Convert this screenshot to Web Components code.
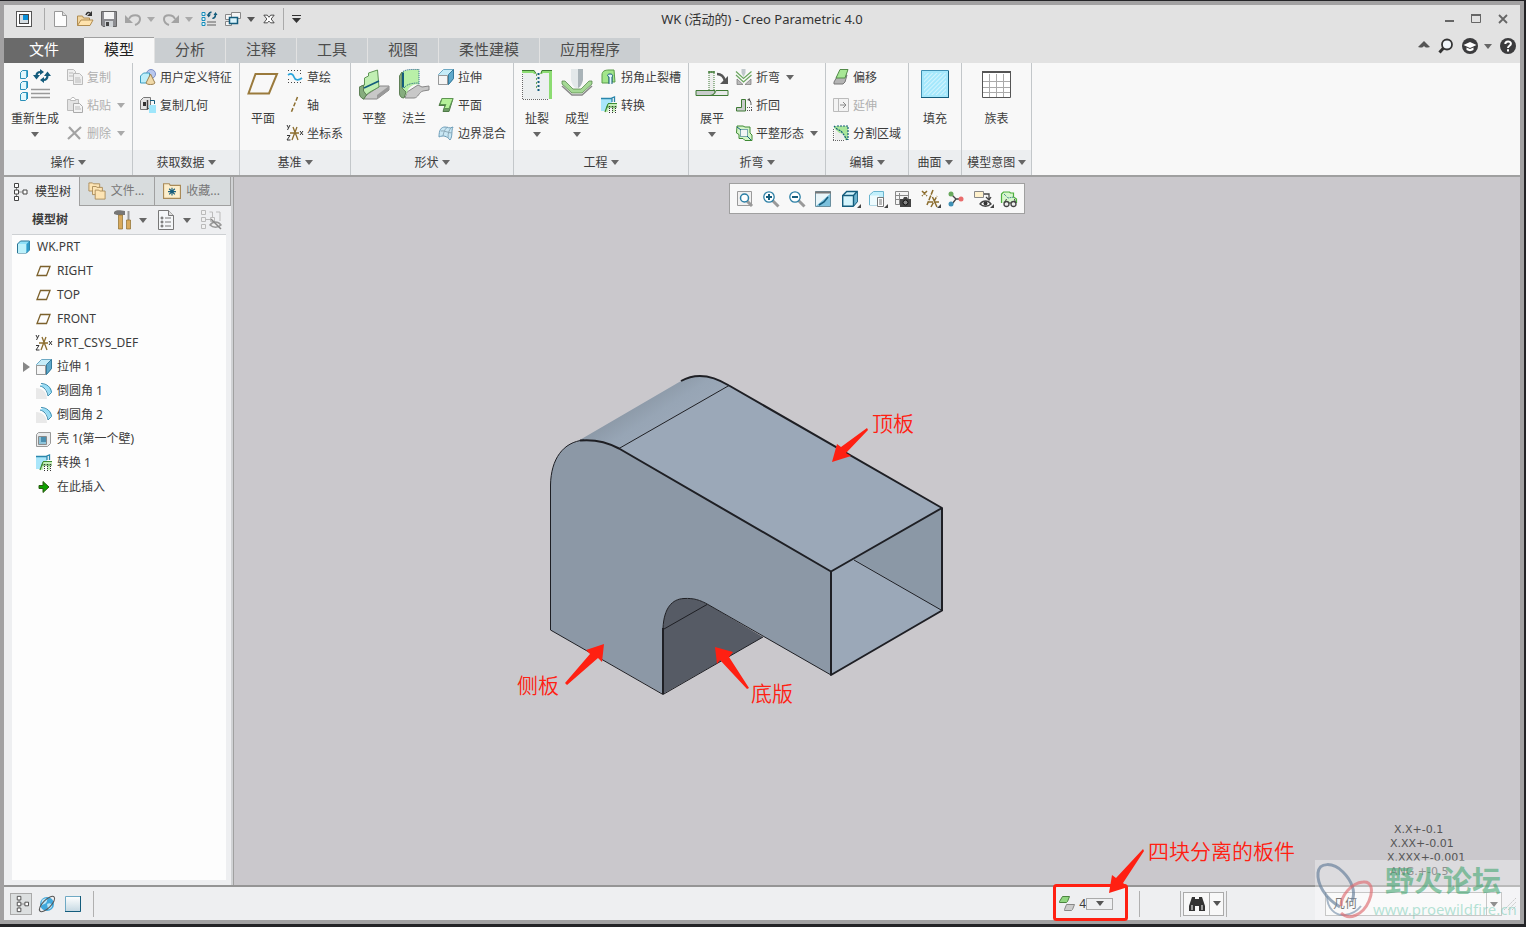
<!DOCTYPE html>
<html lang="zh-CN">
<head>
<meta charset="utf-8">
<title>WK (活动的) - Creo Parametric 4.0</title>
<style>
    html, body {
        margin: 0;
        height: 100%;
    }

    body {
        box-sizing: border-box;
        padding: 1px 2px 3px 0;
        background: #232326;
        color: #3c3c3c;
        font: 12px/16px "Noto Sans", "Noto Sans CJK SC", sans-serif;
        overflow: hidden;
    }
</style>
</head>
<body>
<creo-window></creo-window>

<script>
const ARROW = '<svg class="arrow" width="8" height="5" viewBox="0 0 8 5"><path d="M0 0h8L4 5z" fill="currentColor"/></svg>';

const RESET = `
    button {
        border: 0;
        padding: 0;
        margin: 0;
        background: none;
        color: inherit;
        font: inherit;
        white-space: nowrap;
    }
    svg { display: block; flex: none; }
`;

/* [viewBox size, markup] */
const ICONS = {
    app: [16, '<rect x=".5" y=".5" width="15" height="15" fill="#fff" stroke="#555"/><rect x="3.5" y="3.5" width="9" height="9" fill="#d5dde2" stroke="#444"/><path d="M7 4h5v5H7z" fill="#0a8fd8"/>'],
    'new': [16, '<path d="M1.5.5h8l4 4v11h-12z" fill="#fdfdfd" stroke="#999"/><path d="M9.5.5v4h4" fill="#ddd" stroke="#999"/>'],
    open: [16, '<path d="M.5 14.500V5h5l1 2h6v2" fill="#f2d6a0" stroke="#b08c50"/><path d="M.5 14.500L4 9h12l-3 5.500z" fill="#ffe3ad" stroke="#b08c50"/><path d="M9 4c1-3 3-3 4-2" fill="none" stroke="#333" stroke-width="1.500"/><path d="M15 0v5h-5z" fill="#333"/>'],
    save: [16, '<path d="M.5.5h15v15H2L.5 14z" fill="#8c8c90" stroke="#666"/><path d="M3 1h10v7H3z" fill="#f5f5f5"/><path d="M4 10h8v6H4z" fill="#cfd3d6"/><path d="M5 11h3v4H5z" fill="#444"/>'],
    undo: [16, '<path d="M4 8c2-5 11-5 11 0 0 3-2 5-5 6" fill="none" stroke="#a3a3a3" stroke-width="2"/><path d="M0 4v8h8z" fill="#a3a3a3"/>'],
    redo: [16, '<path d="M12 8C10 3 1 3 1 8c0 3 2 5 5 6" fill="none" stroke="#a3a3a3" stroke-width="2"/><path d="M16 4v8H8z" fill="#a3a3a3"/>'],
    regenSmall: [16, '<g fill="#dff6fb" stroke="#178dbb"><path d="M1 1.500h3v3H1zM1 6.500h3v3H1zM1 11.500h3v3H1z"/></g><path d="M6 11h9M6 14h9" stroke="#8c8c8c" stroke-width="1.500"/><path d="M7.500 4c0-2 2-3 3-2.500M14.500 3.500c0 3-2 4-3 3.500" fill="none" stroke="#145c7c" stroke-width="1.600"/><path d="M5.500 3.500h4.500L7.700 6.500zM12.500 4h4L14.500 1z" fill="#145c7c"/>'],
    windows: [16, '<g fill="#f5f5f5" stroke="#888"><path d="M6.500 1.500h9v6h-9z"/><path d="M.5 3.500h6v5h-6zM.5 10.500h6v4h-6z"/></g><path d="M4.500 6.500h8v6h-8z" fill="#d9f3fb" stroke="#145c7c" stroke-width="1.500"/>'],
    closeDoc: [14, '<path d="M1 2.500h4L7 5l2-2.500h4L9.500 7l3.500 4.500H9L7 9.500l-2 2H1L4.500 7z" fill="#fff" stroke="#333"/>'],
    regen: [32, '<g fill="#e2f7fc" stroke="#2b90b8"><path d="M1.500 3.500l2-2h5v6l-2 2h-5zM1.500 14.500l2-2h5v6l-2 2h-5zM1.500 25.500l2-2h5v6l-2 2h-5z"/></g><path d="M8 2v6M8 13v6M8 24v6" stroke="#178dbb" stroke-width="1.500"/><path d="M12 20.500h19M12 24.500h19M12 28.500h19" stroke="#999" stroke-width="1.500"/><path d="M17.500 7c0-3 2-4 4-4M28.500 6c0 4-2 5-4 5" fill="none" stroke="#145c7c" stroke-width="2.200"/><path d="M14 6h7l-3.500 4.500zM25 7h7l-3.500-4.500zM21 0l4 3-4 3zM25 8l-4 3 4 3z" fill="#145c7c"/>'],
    copy: [16, '<g fill="#eee" stroke="#bbb"><path d="M.5.5h6l2 2v9h-8z"/><path d="M6.500 4.500h6l3 3v8h-9z"/></g><path d="M2 4h4M2 7h4M8 9h5M8 11h6M8 13h6" stroke="#bbb"/>'],
    paste: [16, '<path d="M.5 2.500h11v11H.5z" fill="#e3e3e3" stroke="#bbb"/><path d="M3.500 3.500v-1L5 .5h2l1.500 2v1z" fill="#fff" stroke="#bbb"/><path d="M6.500 6.500h6l3 3v6h-9z" fill="#f3f3f3" stroke="#aaa"/><path d="M8 10h5M8 12h6" stroke="#bbb"/>'],
    remove: [16, '<path d="M2 2l11 12M14 2L1 14" stroke="#a3a3a3" stroke-width="2.200"/>'],
    udf: [16, '<circle cx="11" cy="5" r="4.500" fill="#b9c8ee" stroke="#7c8fc8"/><path d="M.5 7l3-3h6v8l-2 2h-7z" fill="#bdeefa" stroke="#3c9cc0"/><path d="M10.500 5L6 14c1 2 8 2 9 0z" fill="#f0d9a8" stroke="#9c8050"/>'],
    copyGeom: [16, '<path d="M.5 3.500l3-3h7v9l-3 3h-7z" fill="#e5e5e5" stroke="#777"/><path d="M3 5h3v4H3z" fill="#333"/><path d="M7.500 3v9.500" stroke="#444" stroke-width="1.500"/><path d="M9 8h7v8H9z" fill="#9fe6fb"/><path d="M10 3.500h4.500V7" stroke="#145c7c" fill="none"/>'],
    plane: [32, '<path d="M8.500 5H30l-8 19.500H1.500z" fill="none" stroke="#9a7a3c" stroke-width="2"/>'],
    sketch: [16, '<g fill="#444"><path d="M1 1h1v1H1zM4 1h1v1H4zM7 1h1v1H7zM10 1h1v1h-1zM13 1h1v1h-1zM1 13h1v1H1zM4 13h1v1H4zM7 13h1v1H7zM10 13h1v1h-1zM13 13h1v1h-1zM13 4h1v1h-1zM1 10h1v1H1z"/></g><path d="M1 6c3-2 5-1 6 2s4 4 8 1" fill="none" stroke="#2aa5dc" stroke-width="1.700"/>'],
    axis: [16, '<path d="M10.500 0L4 16" stroke="#8c6d2e" stroke-width="1.500" stroke-dasharray="4 2"/>'],
    csys: [16, '<path d="M3 8h9M5 15l5-13M11 15L6 2" stroke="#8c6d2e" stroke-width="1.300"/><path d="M0 0l1.500 3L3 0M1.500 3L.5 5M0 10.500h3L0 15h3.500M13 6l3 4M16 6l-3 4" fill="none" stroke="#333"/>'],
    flat: [32, '<path d="M10 25l12-8h9v4l-12 9H5z" fill="#c8c8c8" stroke="#888"/><path d="M19 26l12-9v4l-12 9z" fill="#999"/><path d="M1.500 18l5-2V9l4-2V4l9-3 1.500 17-9 5-4 3-2 4C3 29 1.500 27 1.500 24z" fill="#c1efb3" stroke="#5f9455"/><path d="M1.500 18l4-2v6l3 4-3 4C3 29 1.500 27 1.500 24z" fill="#86ad7e" stroke="#5f8057"/><path d="M6 19l15-7" stroke="#145c7c" stroke-width="1.700"/>'],
    flange: [32, '<path d="M9 23l11-7 4 2 7-1v4l-6 1c-4 1-5 7-9 7H7z" fill="#c8c8c8" stroke="#888"/><path d="M1.500 7C3 2 6 1 21 .5V15C15 15 10 18 9 24l-3 5C3 29 1.500 27 1.500 24z" fill="#b9f0a8"/><path d="M1.500 7L4 3v16l4 4-2 6C3 29 1.500 27 1.500 24z" fill="#86ad7e" stroke="#5f8057"/><path d="M5 3.500v15" stroke="#145c7c" stroke-width="2"/><path d="M5 2.500C9 0 15 .5 21 .5V16M6 19c3-4 8-5 15-5" fill="none" stroke="#145c7c" stroke-dasharray="1 1"/>'],
    extrude: [16, '<path d="M.5 5.500l5-5h10v9l-5 6h-10z" fill="#c6ecf8" stroke="#6ea9c4"/><path d="M10.500 5.500l5-5v9l-5 6z" fill="#5fa9cb" stroke="#377b9c"/><path d="M.5 6.500h9v9h-9z" fill="#f5f5f5" stroke="#999"/>'],
    planar: [16, '<path d="M4 1.500h11l-4 13H5l2-6H1z" fill="#6e9c66" stroke="#4e7a46"/><path d="M4 1.500h11l-4 10H6l2-4H2z" fill="#b5f099" stroke="#5e9652"/>'],
    blend: [16, '<path d="M1 12c0-7 2-10 6-10 3 0 4 2 8 0-2 4 0 9-3 13-3-4-7-5-11-3z" fill="#c9e7f4" stroke="#6b9cb8"/><path d="M3 6c3-1 7 2 11 2M5 11c1-6 3-8 5-9M10 13c0-5 1-8 3-10" fill="none" stroke="#8ca9b8"/>'],
    rip: [32, '<path d="M2 4h26v26H2z" fill="#eceff0"/><path d="M1.500 30V5M2 30.500h26" stroke="#666" stroke-dasharray="1 1"/><path d="M1 1h12l2 4h-2l-1-1H1zM31 1H21l-2 4h2l1-1h6v26h3z" fill="#8cdc72"/><path d="M1 1.500h12l2 3M31 1.500H21l-1 3" fill="none" stroke="#3f7a34"/><path d="M17.500 4v18" stroke="#145c7c" stroke-width="2" stroke-dasharray="2 2"/><path d="M15.500 5v16" stroke="#6aa65e" stroke-dasharray="2 2"/>'],
    form: [32, '<path d="M10 0h12v11c-1 3-2 8-6 8s-5-5-6-8z" fill="#e3e8ea"/><path d="M17 0h5v11c-1 3-2 7-5 8z" fill="#a9b3b8"/><path d="M1 12h3l8 8h8l8-8h3v3l-10 9H11L1 15z" fill="#a6d996" stroke="#4c8040" stroke-width=".7"/><path d="M1 17l10 9h10l10-9" fill="none" stroke="#888" stroke-width="1.500"/>'],
    relief: [16, '<path d="M1 14V6c0-4 3-5 7-5h5l1 12h-3V6H8v8z" fill="#a2e68b" stroke="#5a9c4a"/><path d="M8 15V8c-2-1-2-3 1-3s3 2 2 3v7" fill="#e5f7fc" stroke="#145c7c"/>'],
    convert: [16, '<path d="M0 1h11v8H6l-1 5H0z" fill="#a9e6fa"/><path d="M0 1.500h10.500M10.500 1l3-1v5M11 1v4" fill="none" stroke="#2a86ac" stroke-width="1.300"/><path d="M4 15l3-8h9v2h-2v6h-3v-5H8l-1 5z" fill="#c3edb6"/><path d="M4 15l3-8M7 6.500h9M5 10h11" fill="none" stroke="#3c8c32" stroke-width="1.200"/><path d="M8.500 9v7M11.500 9v7M14.500 9v7" stroke="#333" stroke-dasharray="1 1"/>'],
    unbend: [32, '<path d="M0 21.500h12l7 0c0 3-2 5-5 5H0z" fill="#c9cccd" stroke="#3f7a34"/><path d="M14 26.500c4 0 5-2 6-5h12v5z" fill="#e8eae9" stroke="#3f7a34"/><path d="M13 21V3h5v18" fill="#eee" stroke="#3f7a34" stroke-dasharray="1 1"/><path d="M12 3h7" stroke="#3f7a34" stroke-width="1.500"/><path d="M21 5c4 0 7 3 8 7" fill="none" stroke="#555" stroke-width="2.500"/><path d="M32 7v8h-8z" fill="#555"/>'],
    bend: [16, '<path d="M5.500 0h4v4L7.500 8 5.500 4z" fill="#c0c8cc"/><path d="M0 2.500l7.500 7 8-7M0 6l7.500 7L15.500 6" fill="none" stroke="#6aa65e" stroke-width="1.200"/><path d="M1 10l6 5.500H1zM15 10l-6 5.500h6z" fill="#bbb" stroke="#777" stroke-width=".7"/>'],
    bendBack: [16, '<path d="M.5 10.500h5v-8h4v11.500h-9z" fill="#c9cccd" stroke="#3f7a34"/><path d="M11 13.500h5M11 10.500h5M15.500 10v4" stroke="#555" stroke-dasharray="1 1"/><path d="M11 3l2.500-2 1 3z" fill="#555"/><path d="M13 3c2 1 2 3 2 5" fill="none" stroke="#555"/>'],
    flatPattern: [16, '<path d="M1 1h6l2 1h5v6l2 2v5.500H9l-2-2H3v-4L.5 8z" fill="#d3f5c7" stroke="#3f8a34"/><path d="M4.500 4.500h7v7h-7z" fill="#f1f4f4" stroke="#145c7c" stroke-dasharray="1 1"/><path d="M1 2l4 3M11 11l4 4" stroke="#145c7c"/>'],
    offset: [16, '<path d="M1 13l4-7h9l-2 7-2 2H1z" fill="#b4b4b4" stroke="#777"/><path d="M3 9L7 .5h8L12 9z" fill="#a7e795" stroke="#538a49"/>'],
    extend: [16, '<path d="M.5 1.500h15v13H.5zM5.500 2v12" fill="#f3f3f3" stroke="#bbb"/><path d="M7 8h6M10 5l3 3-3 3" fill="none" stroke="#888"/>'],
    split: [16, '<path d="M1 1h14v14h-3l-1-5-5-2-5-5z" fill="#a9e69a"/><path d="M2 5v10h9V9L6 8z" fill="#eee"/><path d="M1 1l3 3 4 2 3 4 3 5M4 1h11v14" fill="none" stroke="#145c7c" stroke-width="1.200" stroke-dasharray="2 1"/><path d="M.5 4v12M0 15.500h12" stroke="#666" stroke-dasharray="1 1"/>'],
    fill: [32, '<defs><pattern id="h" width="3" height="3" patternUnits="userSpaceOnUse" patternTransform="rotate(45)"><path d="M0 0v3" stroke="#fff"/></pattern></defs><path d="M2.500 1.500h27v27h-27z" fill="#a5e8fc" stroke="#3f8fb2"/><path d="M5 4h22v22H5z" fill="url(#h)"/><path d="M2 28.500h28M29.500 2v27" stroke="#145c7c"/>'],
    family: [32, '<path d="M1.500 2.500h28v26h-28z" fill="#fff" stroke="#555"/><path d="M8.500 5v23M15.500 5v23M22.500 5v23M2 12.500h27M2 18.500h27M2 23.500h27" stroke="#aaa"/><path d="M1 3h29" stroke="#555" stroke-width="2"/>'],
    tree: [20, '<path d="M4.500 4v12M5 10h7" stroke="#888"/><g fill="#fff" stroke="#444"><path d="M2.500 1.500h4v4h-4zM2.500 8h4v4h-4zM11 8h4v4h-4zM2.500 14.500h4v4h-4z"/></g>'],
    folders: [20, '<g fill="#fde4b4" stroke="#a98a58"><path d="M1 3V1h4l1 1h7v8H1z"/><path d="M5 8V5h4l1 1h6v8H5z"/><path d="M8 12v-3h4l1 1h6v9H8z"/></g>'],
    favorites: [16, '<path d="M.5 14.500V1.500h5l1 1.500h9v11.500z" fill="#fdeecb" stroke="#a98a58"/><path d="M8 5v7M4.500 8.500h7M5.500 6l5 5M10.500 6l-5 5" stroke="#145c7c"/>'],
    hammer: [20, '<path d="M1 2c4-3 7-1 11-1v4H4L1 4z" fill="#777"/><path d="M5.500 5h4v14h-4z" fill="#d9aa5c" stroke="#8c6d2e" stroke-width=".7"/><path d="M14.500 1h2v9h-2z" fill="#999"/><path d="M13.500 10h4v9h-4z" fill="#d9aa5c" stroke="#8c6d2e" stroke-width=".7"/>'],
    settings: [20, '<path d="M1.500.5h10l5 5v14h-15z" fill="#f4f6f8" stroke="#777"/><path d="M11.500.5v5h5" fill="#ddd" stroke="#777"/><g fill="#fff" stroke="#555"><circle cx="5" cy="8" r="1"/><circle cx="5" cy="12" r="1"/><circle cx="5" cy="16" r="1"/></g><path d="M8 8h6M8 12h6M8 16h6" stroke="#777"/>'],
    treeHide: [20, '<g fill="#f1f1f1" stroke="#bbb"><path d="M.5.5h4v4h-4zM.5 7.500h4v4h-4zM.5 14.500h4v4h-4zM9.500 7.500h4v4h-4z"/><path d="M5 9.500h4M8.500 2h3v5M15 2h4v9" fill="none"/></g><path d="M9 15c3-4 8-4 11 0-3 3-8 3-11 0z" fill="#eee" stroke="#999" stroke-width="1.500"/><path d="M10 9l10 10" stroke="#888" stroke-width="1.500"/>'],
    part: [16, '<path d="M1.500 5l3-3h9v9l-3 3h-9z" fill="#8fe0f8" stroke="#2b7494"/><path d="M10.500 5l3-3v9l-3 3z" fill="#2f9bc8"/><path d="M2 5h8v9H2z" fill="#bdf1fb"/>'],
    datum: [16, '<path d="M4.500 3.500H14L10.500 12.500H1z" fill="none" stroke="#7c612c" stroke-width="1.300"/>'],
    round: [16, '<path d="M0 5c6 0 11 4 11 11H0z" fill="#e9e9e9"/><path d="M4 3c5 1 8 4 8 9l4-3c-1-5-4-7-9-8z" fill="#98dcf5"/><path d="M5 .5c6 0 10 4 10.500 9L12 13C11 7 8 4 4 3" fill="none" stroke="#3f8fb2"/>'],
    shell: [16, '<path d="M.5 3.500l2-2h12v11l-3 3h-11z" fill="#e9ebec" stroke="#999"/><path d="M2.500 5.500h8v8h-8z" fill="#8fc4da" stroke="#8a8a8a"/><path d="M5 6h5v5H5z" fill="#4b8fb0"/>'],
    insert: [16, '<path d="M3 6.500h4v-4l6 5.500-6 5.500v-4H3z" fill="#0ea000" stroke="#2a5a10"/>'],
    refit: [16, '<path d="M.5.500h14v14H.5z" fill="#f1f1f1" stroke="#9a9a9a"/><path d="M10 10l5 5" stroke="#999" stroke-width="3"/><circle cx="7.500" cy="7" r="4" fill="#fff" stroke="#2b7fa5" stroke-width="1.500"/>'],
    zoomIn: [16, '<path d="M9.500 9.500l6 6" stroke="#999" stroke-width="3"/><circle cx="6" cy="6" r="5.200" fill="#fff" stroke="#2b7fa5" stroke-width="1.300"/><path d="M3 6h6M6 3v6" stroke="#145c7c" stroke-width="2"/>'],
    zoomOut: [16, '<path d="M9.500 9.500l6 6" stroke="#999" stroke-width="3"/><circle cx="6" cy="6" r="5.200" fill="#fff" stroke="#2b7fa5" stroke-width="1.300"/><path d="M3 6h6" stroke="#145c7c" stroke-width="2"/>'],
    repaint: [16, '<path d="M.5.500h15v15H.5z" fill="#e9f5f9" stroke="#6a8e9e"/><path d="M15 3L1 15h14z" fill="#7cc0dc"/><path d="M0 1.500h16" stroke="#777" stroke-width="2"/><path d="M4 14l5-3 4-5" stroke="#145c7c" fill="none" stroke-width="1.500"/>'],
    cube: [16, '<path d="M.7 4.500l4-4h10.500v10l-4 4.800H.7z" fill="#d4f4fc" stroke="#145c7c" stroke-width="1.400"/><path d="M11 4.500l4-4v10l-4 5z" fill="#6eb4cf"/><path d="M1 4.500h10.500V15M11.500 4.500l3.500-4" fill="none" stroke="#145c7c" stroke-width="1.400"/>'],
    saved: [16, '<path d="M.5 4l4-3.500h10v9L11 14H.5z" fill="#c2f0fc" stroke="#6bb5cf"/><path d="M1 4.500h9V14H1z" fill="#eefbfe"/><path d="M8.500 6.500h6v9h-6z" fill="#fff" stroke="#777"/><path d="M10 9h3M10 11h3M10 13h3" stroke="#777"/>'],
    viewMgr: [16, '<path d="M.5.500h13v13H.5zM1 4.500h12M1 8.500h12M4.500 2v11" fill="#f4f4f4" stroke="#888"/><path d="M5 8h3l1-2h3l1 2h3v8H5z" fill="#444"/><circle cx="10.500" cy="11.500" r="2.500" fill="#888" stroke="#111"/>'],
    datums: [18, '<path d="M1 1l5 5M6 1L1 6M12 0L6 15M7 12h11M10 17l6-11M16 17L11 6" stroke="#8c6d2e" stroke-width="1.500" stroke-dasharray="5 1"/>'],
    spin: [16, '<path d="M4 4l4 4h6M8 8l-4 5" fill="none" stroke="#444" stroke-width="1.300"/><circle cx="3" cy="3" r="2.500" fill="#68a85c"/><circle cx="13" cy="8" r="2.500" fill="#ea6c6c"/><circle cx="3" cy="13" r="2.500" fill="#3f90b5"/>'],
    annot: [18, '<path d="M.5 1.500h9v6h-9z" fill="#fff1cc" stroke="#888"/><path d="M10 4h5v5M12 7l3 3 2-3" fill="none" stroke="#444" stroke-width="1.300"/><path d="M6 14c3-4 8-4 11 0-3 3-8 3-11 0z" fill="#fff" stroke="#444" stroke-width="1.300"/><circle cx="11.500" cy="13.500" r="2" fill="#333"/>'],
    pattern3d: [16, '<path d="M.5 12V3l2-2h6l1 1h3v4l3 2v4" fill="#d7f7cc" stroke="#4eb03f" stroke-width="1.200"/><path d="M3 3l4 4 6-1" fill="none" stroke="#145c7c" stroke-dasharray="1 1"/><circle cx="5.500" cy="13" r="2.500" fill="#eee" stroke="#444" stroke-width="1.300"/><circle cx="12.500" cy="13" r="2.500" fill="#eee" stroke="#444" stroke-width="1.300"/><path d="M8 12h2M3.500 12l2-4M14.500 12l-1-4" stroke="#444"/>'],
    globe: [18, '<circle cx="9" cy="9" r="7" fill="#41a8dc"/><path d="M4 5c3-2 6-3 5 1S4 9 3 11M9 9c3-2 5 0 5 2s-3 4-4 3z" fill="#b9e6f8"/><ellipse cx="9" cy="9" rx="10" ry="4" transform="rotate(-45 9 9)" fill="none" stroke="#555"/>'],
    blank: [16, '<defs><linearGradient id="b" x2="0" y2="1"><stop stop-color="#fff"/><stop offset="1" stop-color="#c5d8e2"/></linearGradient></defs><path d="M.5.500h15v15H.5z" fill="url(#b)" stroke="#6fa9c4"/><path d="M0 15.500h15.500V0" fill="none" stroke="#145c7c"/>'],
    pieces: [16, '<path d="M.5 5.500l3-5h7l-2 5-1 1h-7z" fill="#90d680" stroke="#4c8541"/><path d="M5.500 13.500l2-5h8l-2 5-1 1h-7z" fill="#ccc" stroke="#888"/>'],
    binoculars: [16, '<path d="M3 1h3v2h4V1h3l3 9v5h-6v-5H6v5H0v-5z" fill="#333"/><path d="M2 9h2v5H2zM12 9h2v5h-2z" fill="#999"/>'],
    minimize: [12, '<path d="M2 8h9" stroke="#666" stroke-width="2"/>'],
    maximize: [12, '<path d="M1.500 1.500h9v8h-9z" fill="none" stroke="#666"/><path d="M1 2h10" stroke="#666" stroke-width="2"/>'],
    close: [12, '<path d="M2 2l8 8M10 2l-8 8" stroke="#666" stroke-width="1.800"/>'],
    collapse: [12, '<path d="M0 7l6-6 6 6-2 .500H2z" fill="#555"/><path d="M4 8l2-2 2 2z" fill="#e2e2e2"/>'],
    search: [16, '<circle cx="9" cy="6.500" r="5" fill="#f1f6fa" stroke="#333" stroke-width="1.800"/><path d="M5.500 10l-4 4.500" stroke="#333" stroke-width="3"/>'],
    learn: [16, '<circle cx="8" cy="8" r="8" fill="#3b3b3d"/><path d="M1.500 7L8 4l6.500 3L8 10z" fill="#fff"/><path d="M4.500 9.500V12c2 1.500 5 1.500 7 0V9.500L8 11z" fill="#fff"/>'],
    help: [16, '<circle cx="8" cy="8" r="8" fill="#3b3b3d"/><path d="M5.300 6c0-3.500 5.600-3.300 5.600-.3C10.900 7.700 8 7.800 8 10M8 11.200v2.200" fill="none" stroke="#fff" stroke-width="2"/>']
};

customElements.define('creo-icon',
    class extends HTMLElement {
        constructor() {
            super();
            this.attachShadow({mode: 'open'});
        }

        connectedCallback() {
            const [box, markup] = ICONS[this.getAttribute('name')];
            const size = this.getAttribute('size') || 16;
            this.shadowRoot.innerHTML = `
    <style>
    :host { display: block; flex: none; }
    svg { display: block; overflow: visible; }
    </style>
    <svg width="${size}" height="${size}" viewBox="0 0 ${box} ${box}" aria-hidden="true">${markup}</svg>
`;
        }
    }
);

customElements.define('ribbon-tab',
    class extends HTMLElement {
        constructor() {
            super();
            this.attachShadow({mode: 'open'}).innerHTML = `
    <style>
    ${RESET}
    :host { display: block; background: #caced1; color: #4c4c4c; }
    :host([kind="file"]) { background: #6a6a6a; color: #fff; padding: 0 5px; }
    :host([kind="active"]) { background: #f8f8f8; color: #222; box-shadow: 0 -1px #a0a0a0; }
    button { height: 25px; padding: 0 20px 3px; font-size: 15px; line-height: 22px; }
    </style>
    <button><slot></slot></button>
`;
        }
    }
);

customElements.define('ribbon-group',
    class extends HTMLElement {
        constructor() {
            super();
            this.attachShadow({mode: 'open'});
        }

        connectedCallback() {
            this.shadowRoot.innerHTML = `
    <style>
    ${RESET}
    :host {
        display: flex;
        flex-direction: column;
        border-right: 1px solid #c3c7ca;
    }
    .body {
        display: flex;
        justify-content: center;
        gap: 8px;
        flex: 1;
        padding: 0 7px;
    }
    .title {
        display: flex;
        align-items: center;
        justify-content: center;
        gap: 3px;
        height: 25px;
        padding: 0 5px;
        background: #eceef0;
    }
    .arrow { color: #666; }
    ::slotted(div) { display: flex; flex-direction: column; }
    </style>
    <div class="body"><slot></slot></div>
    <button class="title">${this.getAttribute('label')}${ARROW}</button>
`;
        }
    }
);

customElements.define('tool-button',
    class extends HTMLElement {
        constructor() {
            super();
            this.attachShadow({mode: 'open'});
        }

        connectedCallback() {
            const big = this.hasAttribute('big');
            this.shadowRoot.innerHTML = `
    <style>
    ${RESET}
    :host { display: block; }
    :host([disabled]) { color: #b0b0b0; }
    button {
        display: flex;
        align-items: center;
        gap: 4px;
        height: 28px;
    }
    .label { padding-top: 2px; }
    .arrow { margin-left: 2px; color: #666; }
    :host([disabled]) .arrow { color: #aaa; }
    :host([big]) button {
        flex-direction: column;
        gap: 0;
        min-width: 32px;
        height: 87px;
        padding-top: 6px;
        box-sizing: border-box;
    }
    :host([big]) .label { margin-top: 7px; line-height: 18px; }
    :host([big]) .arrow { margin: 4px 0 0; }
    </style>
    <button ${this.hasAttribute('disabled') ? 'disabled' : ''}>
        <creo-icon name="${this.getAttribute('icon')}" size="${big ? 32 : 16}"></creo-icon>
        <span class="label"><slot></slot></span>
        ${this.hasAttribute('menu') ? ARROW : ''}
    </button>
`;
        }
    }
);

customElements.define('title-bar',
    class extends HTMLElement {
        constructor() {
            super();
            this.attachShadow({mode: 'open'}).innerHTML = `
    <style>
    ${RESET}
    :host {
        display: grid;
        grid-template-columns: 1fr auto 1fr;
        align-items: center;
        height: 28px;
    }
    .quick { display: flex; align-items: center; gap: 8px; padding-left: 12px; }
    .sep { width: 1px; height: 22px; background: #aaa; }
    .quick .arrow { color: #555; }
    .quick .off .arrow { color: #aaa; }
    .pair { display: flex; align-items: center; gap: 6px; }
    .first { margin-right: 4px; }
    h1 { margin: 0; font-size: 13px; font-weight: 400; color: #333; }
    .controls { display: flex; justify-content: flex-end; gap: 15px; padding-right: 11px; }
    </style>
    <div class="quick">
        <button class="first" aria-label="应用"><creo-icon name="app"></creo-icon></button>
        <span class="sep"></span>
        <button aria-label="新建"><creo-icon name="new"></creo-icon></button>
        <button aria-label="打开"><creo-icon name="open"></creo-icon></button>
        <button aria-label="保存"><creo-icon name="save"></creo-icon></button>
        <button class="pair off" aria-label="撤消"><creo-icon name="undo"></creo-icon>${ARROW}</button>
        <button class="pair off" aria-label="重做"><creo-icon name="redo"></creo-icon>${ARROW}</button>
        <button aria-label="重新生成"><creo-icon name="regenSmall"></creo-icon></button>
        <button class="pair" aria-label="窗口"><creo-icon name="windows"></creo-icon>${ARROW}</button>
        <button aria-label="关闭"><creo-icon name="closeDoc" size="12"></creo-icon></button>
        <span class="sep"></span>
        <button aria-label="自定义"><svg width="9" height="8" viewBox="0 0 9 8"><path d="M0 .5h9" stroke="#333"/><path d="M0 3h9L4.500 8z" fill="#333"/></svg></button>
    </div>
    <h1>WK (活动的) - Creo Parametric 4.0</h1>
    <div class="controls">
        <button aria-label="最小化"><creo-icon name="minimize" size="12"></creo-icon></button>
        <button aria-label="最大化"><creo-icon name="maximize" size="12"></creo-icon></button>
        <button aria-label="关闭窗口"><creo-icon name="close" size="12"></creo-icon></button>
    </div>
`;
        }
    }
);

customElements.define('creo-ribbon',
    class extends HTMLElement {
        constructor() {
            super();
            this.attachShadow({mode: 'open'}).innerHTML = `
    <style>
    ${RESET}
    :host { display: block; }
    .tabs { display: flex; gap: 1px; padding-top: 5px; }
    .tabs ribbon-tab:first-child { margin-right: -1px; }
    .tools {
        display: flex;
        align-items: center;
        gap: 8px;
        margin: -9px 4px 0 auto;
    }
    .tools .menu { display: flex; align-items: center; gap: 6px; color: #666; }
    .panels {
        display: flex;
        height: 112px;
        background: #f8f8f8;
        border-bottom: 2px solid #a0a0a0;
    }
    .surface { min-width: 52px; }
    </style>
    <nav class="tabs">
        <ribbon-tab kind="file">文件</ribbon-tab>
        <ribbon-tab kind="active">模型</ribbon-tab>
        <ribbon-tab>分析</ribbon-tab>
        <ribbon-tab>注释</ribbon-tab>
        <ribbon-tab>工具</ribbon-tab>
        <ribbon-tab>视图</ribbon-tab>
        <ribbon-tab>柔性建模</ribbon-tab>
        <ribbon-tab>应用程序</ribbon-tab>
        <div class="tools">
            <button aria-label="折叠"><creo-icon name="collapse" size="12"></creo-icon></button>
            <button aria-label="搜索"><creo-icon name="search"></creo-icon></button>
            <button class="menu" aria-label="学习"><creo-icon name="learn"></creo-icon>${ARROW}</button>
            <button aria-label="帮助"><creo-icon name="help"></creo-icon></button>
        </div>
    </nav>
    <div class="panels">
        <ribbon-group label="操作">
            <tool-button big menu icon="regen">重新生成</tool-button>
            <div>
                <tool-button disabled icon="copy">复制</tool-button>
                <tool-button disabled menu icon="paste">粘贴</tool-button>
                <tool-button disabled menu icon="remove">删除</tool-button>
            </div>
        </ribbon-group>
        <ribbon-group label="获取数据">
            <div>
                <tool-button icon="udf">用户定义特征</tool-button>
                <tool-button icon="copyGeom">复制几何</tool-button>
            </div>
        </ribbon-group>
        <ribbon-group label="基准">
            <tool-button big icon="plane">平面</tool-button>
            <div>
                <tool-button icon="sketch">草绘</tool-button>
                <tool-button icon="axis">轴</tool-button>
                <tool-button icon="csys">坐标系</tool-button>
            </div>
        </ribbon-group>
        <ribbon-group label="形状">
            <tool-button big icon="flat">平整</tool-button>
            <tool-button big icon="flange">法兰</tool-button>
            <div>
                <tool-button icon="extrude">拉伸</tool-button>
                <tool-button icon="planar">平面</tool-button>
                <tool-button icon="blend">边界混合</tool-button>
            </div>
        </ribbon-group>
        <ribbon-group label="工程">
            <tool-button big menu icon="rip">扯裂</tool-button>
            <tool-button big menu icon="form">成型</tool-button>
            <div>
                <tool-button icon="relief">拐角止裂槽</tool-button>
                <tool-button icon="convert">转换</tool-button>
            </div>
        </ribbon-group>
        <ribbon-group label="折弯">
            <tool-button big menu icon="unbend">展平</tool-button>
            <div>
                <tool-button menu icon="bend">折弯</tool-button>
                <tool-button icon="bendBack">折回</tool-button>
                <tool-button menu icon="flatPattern">平整形态</tool-button>
            </div>
        </ribbon-group>
        <ribbon-group label="编辑">
            <div>
                <tool-button icon="offset">偏移</tool-button>
                <tool-button disabled icon="extend">延伸</tool-button>
                <tool-button icon="split">分割区域</tool-button>
            </div>
        </ribbon-group>
        <ribbon-group class="surface" label="曲面">
            <tool-button big icon="fill">填充</tool-button>
        </ribbon-group>
        <ribbon-group label="模型意图">
            <tool-button big icon="family">族表</tool-button>
        </ribbon-group>
    </div>
`;
        }
    }
);

customElements.define('tree-item',
    class extends HTMLElement {
        constructor() {
            super();
            this.attachShadow({mode: 'open'});
        }

        connectedCallback() {
            const parent = this.hasAttribute('parent');
            this.shadowRoot.innerHTML = `
    <style>
    :host {
        display: flex;
        align-items: center;
        height: 24px;
        padding-left: 24px;
        gap: 5px;
    }
    :host([root]) { padding-left: 4px; }
    :host([parent]) { padding-left: 10px; }
    </style>
    ${parent ? '<svg width="9" height="10" viewBox="0 0 9 10"><path d="M1 0v10l7-5z" fill="#888"/></svg>' : ''}
    <creo-icon name="${this.getAttribute('icon')}"></creo-icon>
    <span><slot></slot></span>
`;
        }
    }
);

customElements.define('model-tree',
    class extends HTMLElement {
        constructor() {
            super();
            this.attachShadow({mode: 'open'}).innerHTML = `
    <style>
    ${RESET}
    :host {
        box-sizing: border-box;
        display: flex;
        flex-direction: column;
        flex: none;
        width: 230px;
        background: #eeeff1;
        border-right: 1px solid #a0a0a0;
        box-shadow: inset -2px 0 #d0d2d4;
    }
    .tabs { display: flex; height: 29px; margin-right: 2px; }
    .tabs button {
        box-sizing: border-box;
        display: flex;
        align-items: center;
        gap: 5px;
        width: 76px;
        padding-left: 8px;
        background: #d8dcdd;
        border-right: 1px solid #a0a0a0;
        border-bottom: 1px solid #a0a0a0;
        color: #777;
    }
    .tabs .active { background: none; border-bottom: 0; color: #333; gap: 3px; padding-left: 8px; }
    .head { display: flex; align-items: center; height: 28px; padding-left: 28px; }
    .head b { width: 81px; }
    .head .menu { display: flex; align-items: center; gap: 6px; width: 44px; color: #666; }
    .tree {
        flex: 1;
        margin: 0 7px 5px 8px;
        background: #fdfdfd;
        border-top: 1px solid #cdd0d3;
    }
    </style>
    <div class="tabs">
        <button class="active"><creo-icon name="tree" size="20"></creo-icon>模型树</button>
        <button><creo-icon name="folders" size="18"></creo-icon>文件...</button>
        <button><creo-icon name="favorites" size="18"></creo-icon>收藏...</button>
    </div>
    <div class="head">
        <b>模型树</b>
        <button class="menu" aria-label="设置"><creo-icon name="hammer" size="20"></creo-icon>${ARROW}</button>
        <button class="menu" aria-label="显示"><creo-icon name="settings" size="20"></creo-icon>${ARROW}</button>
        <button aria-label="隐藏" disabled><creo-icon name="treeHide" size="20"></creo-icon></button>
    </div>
    <div class="tree">
        <tree-item root icon="part">WK.PRT</tree-item>
        <tree-item icon="datum">RIGHT</tree-item>
        <tree-item icon="datum">TOP</tree-item>
        <tree-item icon="datum">FRONT</tree-item>
        <tree-item icon="csys">PRT_CSYS_DEF</tree-item>
        <tree-item parent icon="extrude">拉伸 1</tree-item>
        <tree-item icon="round">倒圆角 1</tree-item>
        <tree-item icon="round">倒圆角 2</tree-item>
        <tree-item icon="shell">壳 1(第一个壁)</tree-item>
        <tree-item icon="convert">转换 1</tree-item>
        <tree-item icon="insert">在此插入</tree-item>
    </div>
`;
        }
    }
);

customElements.define('view-toolbar',
    class extends HTMLElement {
        constructor() {
            super();
            const tools = ['refit', 'zoomIn', 'zoomOut', 'repaint', 'cube*', 'saved*', 'viewMgr', 'datums*', 'spin', 'annot*', 'pattern3d'];
            this.attachShadow({mode: 'open'}).innerHTML = `
    <style>
    ${RESET}
    :host {
        display: flex;
        padding: 0 2px;
        border: 1px solid #a0a0a0;
        background: #f8f8f8;
    }
    button {
        display: flex;
        align-items: center;
        justify-content: center;
        position: relative;
        width: 26px;
        height: 29px;
    }
    .menu { width: 27px; }
    .menu::after {
        content: "";
        position: absolute;
        right: 2px;
        bottom: 5px;
        border: 2px solid transparent;
        border-right-color: #444;
        border-bottom-color: #444;
    }
    </style>
    ${tools.map((t) => {
        const name = t.replace('*', '');
        return `<button class="${t === name ? '' : 'menu'}" aria-label="${name}"><creo-icon name="${name}" size="${ICONS[name][0]}"></creo-icon></button>`;
    }).join('')}
`;
        }
    }
);

customElements.define('model-view',
    class extends HTMLElement {
        constructor() {
            super();
            this.attachShadow({mode: 'open'}).innerHTML = `
    <style>
    :host {
        display: flex;
        justify-content: center;
        align-items: flex-start;
        position: relative;
        flex: 1;
        padding-top: 6px;
        background: #cac8cc;
        overflow: hidden;
    }
    .model { position: absolute; left: 266px; top: 183px; }
    .model text { font-size: 21px; font-weight: 350; fill: #ff2012; }
    .tolerance {
        position: absolute;
        right: 50px;
        bottom: 6px;
        width: 84px;
        font-family: "DejaVu Sans", sans-serif;
        font-size: 11px;
        line-height: 14px;
        color: #555;
    }
    .tolerance div { padding-left: 4px; }
    .tolerance div:first-child { padding-left: 8px; }
    .tolerance div:nth-child(3) { padding-left: 1px; }
    </style>
    <view-toolbar></view-toolbar>
    <svg class="model" width="460" height="360" viewBox="500 360 460 360">
        <defs>
            <linearGradient id="roll" gradientUnits="userSpaceOnUse" x1="628" y1="408" x2="650" y2="442">
                <stop stop-color="#8c99a7"/><stop offset=".5" stop-color="#97a5b5"/><stop offset="1" stop-color="#9ba8b8"/>
            </linearGradient>
        </defs>
        <path d="M578 441L681 381C695 373 712 375 729 385.500L619 448.500C606 441 592 438 578 441z" fill="url(#roll)"/>
        <path d="M619 448.500L729 385.500 942 508 831 571.500z" fill="#9ba8b8"/>
        <path d="M831 571.500L942 508V610.500L831 675z" fill="#9ba8b8"/>
        <path d="M854 559L942 508V610.500z" fill="#8b98a6"/>
        <path d="M663 694V628C664 608 672 599 684 598.500 694 598 700 600 708 604.500L763 637z" fill="#565b65"/>
        <path d="M550.500 630V485C551 459 563 442 584 440 596 439 607 442 619 448.500L831 571.500V675L708 604.500C700 600 694 598 684 598.500 672 599 664 608 663 628V694z" fill="#8c98a6"/>
        <g fill="none" stroke="#1e1f24" stroke-linejoin="round">
            <path d="M550.500 485V630L663 694.500 763 637M831 675L708 604.500C700 600 694 598 684 598.500 672 599 664 608 663 628M619 448.500L729 385.500M854 560L942 610.500M664 629L707 604.500M550.500 485C551 459 563 442 584 440"/>
            <path stroke-width="2" d="M580 440.500C596 439 607 442 619 448.500L831 571.500 942 508 729 385.500C712 375 695 373 681 381M831 571.500V675L942 610.500V508M663 628V694"/>
        </g>
        <g fill="#ff2012">
            <path d="M832 462L837 444 841 447 867 428 868 430 846 453 851 456z"/>
            <path d="M604 644L586 650 590 654 565 683 567 685 598 658 602 662z"/>
            <path d="M715 647L733 652 729 657 749 688 747 689 720 660 717 664z"/>
            <text x="872" y="431">顶板</text>
            <text x="517" y="693">侧板</text>
            <text x="751" y="701">底版</text>
        </g>
    </svg>
    <div class="tolerance">
        <div>X.X+-0.1</div>
        <div>X.XX+-0.01</div>
        <div>X.XXX+-0.001</div>
        <div>ANG.+-0.5</div>
    </div>
`;
        }
    }
);

customElements.define('status-bar',
    class extends HTMLElement {
        constructor() {
            super();
            this.attachShadow({mode: 'open'}).innerHTML = `
    <style>
    ${RESET}
    :host {
        display: flex;
        align-items: center;
        flex: none;
        height: 33px;
        padding: 0 4px 0 6px;
        background: #eeeff1;
        border-top: 2px solid #959595;
    }
    .toggle {
        box-sizing: border-box;
        display: grid;
        place-items: center;
        width: 22px;
        height: 22px;
        padding-left: 4px;
        margin-right: 6px;
        background: #dcdfe0;
        border: 1px solid #aaa;
    }
    .plain { margin-right: 9px; }
    .sep { width: 1px; height: 26px; background: #b0b0b0; }
    .sep.after { margin-left: 3px; }
    .sep.wide { margin-left: 40px; }
    .count {
        position: relative;
        display: flex;
        align-items: center;
        gap: 4px;
        margin: 0 26px 0 auto;
    }
    .count .list {
        display: grid;
        place-items: center;
        width: 27px;
        height: 12px;
        margin-left: -4px;
        border: 1px solid #aaa;
        box-sizing: border-box;
    }
    .arrow { color: #555; }
    /* callout drawn over the piece counter */
    .callout { position: absolute; left: -7px; bottom: -9px; }
    .callout text { font-size: 21px; font-weight: 350; fill: #ff2012; }
    .find { display: flex; margin: 0 2px; border: 1px solid #aaa; background: #f8f8f8; }
    .find button { display: grid; place-items: center; width: 13px; height: 22px; }
    .find button:first-child { width: 26px; border-right: 1px solid #aaa; }
    .filter { position: relative; display: flex; margin: 0 2px 0 98px; }
    select {
        appearance: none;
        width: 177px;
        height: 24px;
        padding: 0 7px;
        background: #f8f8f8;
        border: 1px solid #aaa;
        border-radius: 0;
        color: #333;
        font: inherit;
    }
    .filter .arrow {
        position: absolute;
        right: 1px;
        top: 1px;
        box-sizing: content-box;
        padding: 9px 3px 8px;
        border-left: 1px solid #aaa;
    }
    </style>
    <button class="toggle" aria-label="模型树"><creo-icon name="tree" size="18"></creo-icon></button>
    <button class="plain" aria-label="浏览器"><creo-icon name="globe" size="18"></creo-icon></button>
    <button class="plain" aria-label="全屏"><creo-icon name="blank"></creo-icon></button>
    <span class="sep after"></span>
    <div class="count">
        <creo-icon name="pieces"></creo-icon>
        <span>4</span>
        <button class="list" aria-label="4">${ARROW}</button>
        <svg class="callout" width="250" height="84" viewBox="1052 837 250 84">
            <rect x="1054.500" y="885.500" width="72" height="34" rx="2" fill="none" stroke="#ff2012" stroke-width="3"/>
            <path d="M1109 893L1112 875 1116 878 1143 849 1144 851 1123 883 1128 887z" fill="#ff2012"/>
            <text x="1148" y="859">四块分离的板件</text>
        </svg>
    </div>
    <span class="sep"></span>
    <span class="sep wide"></span>
    <div class="find">
        <button aria-label="查找"><creo-icon name="binoculars"></creo-icon></button>
        <button aria-label="查找选项">${ARROW}</button>
    </div>
    <span class="sep"></span>
    <div class="filter">
        <select aria-label="过滤器"><option>几何</option></select>
        ${ARROW}
    </div>
    <svg width="12" height="12" viewBox="0 0 12 12"><path d="M0 12L12 0M4 12l8-8M8 12l4-4" stroke="#aaa" stroke-dasharray="2 1"/></svg>
`;
        }
    }
);

customElements.define('forum-mark',
    class extends HTMLElement {
        constructor() {
            super();
            this.attachShadow({mode: 'open'}).innerHTML = `
    <style>
    :host {
        display: flex;
        box-sizing: border-box;
        width: 205px;
        height: 60px;
        background: rgba(255, 255, 255, .35);
        pointer-events: none;
    }
    svg { flex: none; }
    .name {
        margin: 6px 0 4px 12px;
        font-size: 29px;
        line-height: 30px;
        font-weight: 700;
        color: rgba(50, 160, 100, .55);
    }
    .url { font-size: 15px; line-height: 18px; color: rgba(110, 200, 175, .5); }
    </style>
    <svg width="58" height="60" viewBox="0 0 58 60">
        <g fill="none" stroke-opacity=".65">
            <path d="M25 47C10 38 2 24 3 13 4 2 18 2 28 12c9 9 13 20 9 29" stroke="#627c98" stroke-width="3"/>
            <path d="M12 36c0 12 8 20 18 19 8-1 13-5 16-9" stroke="#7a92ac" stroke-width="2"/>
            <path d="M26 53c8 8 22 2 28-12 5-12 2-20-6-19-12 1-22 14-22 24" stroke="#df6c70" stroke-width="3"/>
        </g>
    </svg>
    <div>
        <div class="name">野火论坛</div>
        <div class="url">www.proewildfire.cn</div>
    </div>
`;
        }
    }
);

customElements.define('creo-window',
    class extends HTMLElement {
        constructor() {
            super();
            this.attachShadow({mode: 'open'}).innerHTML = `
    <style>
    :host {
        box-sizing: border-box;
        display: flex;
        flex-direction: column;
        position: relative;
        height: 100%;
        border: 4px solid #a2a1a2;
        background: #e2e2e2;
    }
    main { display: flex; flex: 1; min-height: 0; }
    forum-mark { position: absolute; right: 0; bottom: 0; }
    </style>
    <title-bar></title-bar>
    <creo-ribbon></creo-ribbon>
    <main>
        <model-tree></model-tree>
        <model-view></model-view>
    </main>
    <status-bar></status-bar>
    <forum-mark></forum-mark>
`;
        }
    }
);
</script>
</body>
</html>
